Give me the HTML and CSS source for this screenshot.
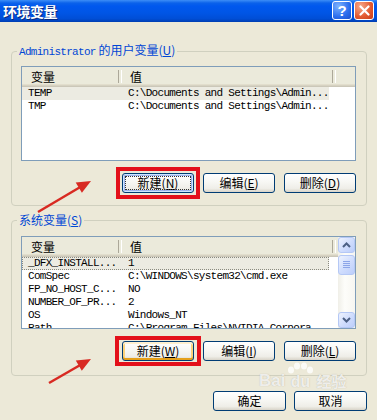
FILE: index.html
```html
<!DOCTYPE html>
<html lang="zh-CN">
<head>
  <meta charset="UTF-8">
  <meta name="viewport" content="width=device-width, initial-scale=1.0">
  <title>环境变量</title>
  <link rel="stylesheet" href="styles.css">
</head>
<body>
  <div class="window">
    <!-- Title bar -->
    <div class="titlebar">
      <span class="title">环境变量</span>
      <div class="caption">
        <button class="cap help">?</button>
        <button class="cap close">
          <svg width="11" height="11" viewBox="0 0 11 11"><path d="M1.5 1.5 L9.5 9.5 M9.5 1.5 L1.5 9.5" stroke="#fff" stroke-width="2.2" stroke-linecap="round"/></svg>
        </button>
      </div>
    </div>

    <div class="client">
      <!-- User variables -->
      <fieldset class="group user-group">
        <legend><span class="mono">Administrator</span> 的用户变量(<u>U</u>)</legend>
        <div class="listview user-list">
          <div class="lv-main">
            <div class="lv-header">
              <span class="hcell name">变量</span>
              <span class="hcell value">值</span>
            </div>
            <div class="row selected">
              <span class="cell name">TEMP</span>
              <span class="cell value">C:\Documents and Settings\Admin...</span>
            </div>
            <div class="row">
              <span class="cell name">TMP</span>
              <span class="cell value">C:\Documents and Settings\Admin...</span>
            </div>
          </div>
        </div>
        <div class="buttons">
          <span class="mark"><button class="btn default">新建(<u>N</u>)</button></span>
          <button class="btn">编辑(<u>E</u>)</button>
          <button class="btn">删除(<u>D</u>)</button>
        </div>
      </fieldset>

      <!-- System variables -->
      <fieldset class="group sys-group">
        <legend>系统变量(<u>S</u>)</legend>
        <div class="listview sys-list">
          <div class="lv-main">
            <div class="lv-header">
              <span class="hcell name">变量</span>
              <span class="hcell value">值</span>
            </div>
            <div class="row selected focus">
              <span class="cell name">_DFX_INSTALL...</span>
              <span class="cell value">1</span>
            </div>
            <div class="row">
              <span class="cell name">ComSpec</span>
              <span class="cell value">C:\WINDOWS\system32\cmd.exe</span>
            </div>
            <div class="row">
              <span class="cell name">FP_NO_HOST_C...</span>
              <span class="cell value">NO</span>
            </div>
            <div class="row">
              <span class="cell name">NUMBER_OF_PR...</span>
              <span class="cell value">2</span>
            </div>
            <div class="row">
              <span class="cell name">OS</span>
              <span class="cell value">Windows_NT</span>
            </div>
            <div class="row">
              <span class="cell name">Path</span>
              <span class="cell value">C:\Program Files\NVIDIA Corpora...</span>
            </div>
          </div>
          <div class="scrollbar">
            <span class="sb-btn">
              <svg width="9" height="6" viewBox="0 0 9 6"><path d="M1 5 L4.5 1.5 L8 5" fill="none" stroke="#4d6185" stroke-width="2"/></svg>
            </span>
            <span class="sb-track">
              <span class="sb-thumb">
                <svg width="7" height="8" viewBox="0 0 7 8"><path d="M0 0.5 H7 M0 2.5 H7 M0 4.5 H7 M0 6.5 H7" stroke="#8ca5e8" stroke-width="1"/></svg>
              </span>
            </span>
            <span class="sb-btn">
              <svg width="9" height="6" viewBox="0 0 9 6"><path d="M1 1 L4.5 4.5 L8 1" fill="none" stroke="#4d6185" stroke-width="2"/></svg>
            </span>
          </div>
        </div>
        <div class="buttons">
          <span class="mark mark-wide"><button class="btn hot">新建(<u>W</u>)</button></span>
          <button class="btn">编辑(<u>I</u>)</button>
          <button class="btn">删除(<u>L</u>)</button>
        </div>
      </fieldset>

      <div class="footer-buttons">
        <button class="btn">确定</button>
        <button class="btn">取消</button>
      </div>
    </div>

    <!-- Baidu watermark -->
    <div class="watermark">
      <span class="wm-bai">Bai</span>
      <span class="wm-du">
        <svg width="30" height="12" viewBox="0 0 30 12">
          <ellipse cx="6" cy="8" rx="3" ry="3.5"/>
          <ellipse cx="12" cy="4" rx="3" ry="3.5"/>
          <ellipse cx="19" cy="4" rx="3" ry="3.5"/>
          <ellipse cx="25" cy="8" rx="3" ry="3.5"/>
        </svg>
        <span>du</span>
      </span>
      <span class="wm-jy">经验</span>
    </div>

    <!-- Annotation arrows -->
    <svg class="arrows" width="377" height="420" viewBox="0 0 377 420">
      <line x1="38" y1="212" x2="82" y2="186" stroke="#d82a22" stroke-width="2.5"/>
      <polygon points="91,181 81.9,192.8 75.7,182.5" fill="#d82a22"/>
      <line x1="49" y1="383" x2="82" y2="364" stroke="#d82a22" stroke-width="2.5"/>
      <polygon points="91,359 81.8,370.8 75.8,360.4" fill="#d82a22"/>
    </svg>
  </div>
</body>
</html>
```

FILE: styles.css
```css
/* General */
* {
  box-sizing: border-box;
}

body {
  margin: 0;
  width: 377px;
  height: 420px;
  overflow: hidden;
  background: #ece9d8;
  font-family: "Noto Sans CJK SC", "Noto Sans", sans-serif;
  font-size: 12px;
  color: #000;
}

.window {
  position: relative;
  height: 420px;
}

/* Title bar */
.titlebar {
  height: 22px;
  display: flex;
  align-items: flex-start;
  justify-content: space-between;
  padding: 1px 3px 0 3px;
  background: linear-gradient(to bottom, #3d8ef7 0, #0b62ea 3px, #0058ee 6px, #0055e5 60%, #004ed6 85%, #003eb2 100%);
}

.title {
  color: #fff;
  font-weight: bold;
  font-size: 14px;
  line-height: 20px;
  letter-spacing: -0.5px;
  text-shadow: 1px 1px 0 #0a2a7e;
}

.caption {
  display: flex;
  gap: 2px;
}

.cap {
  width: 20px;
  height: 19px;
  padding: 0;
  border: 1px solid #fff;
  border-radius: 3px;
  display: flex;
  align-items: center;
  justify-content: center;
  color: #fff;
  font: bold 15px/17px "Liberation Sans", sans-serif;
}

.help {
  background: radial-gradient(circle at 30% 25%, #7db3ff 0, #2b6ded 60%, #1c4fcc 100%);
}

.close {
  background: radial-gradient(circle at 30% 25%, #f7a98b 0, #e2582f 60%, #c63e1b 100%);
}

/* Client area */
.client {
  padding: 21px 10px 0 11px;
}

.group {
  margin: 0;
  padding: 0 10px 12px 9px;
  min-inline-size: 0;
  border: 1px solid #d0d0bf;
  border-radius: 4px;
}

.sys-group {
  margin-top: 7px;
  padding-bottom: 14px;
}

.group legend {
  margin-left: -4px;
  padding: 0 2px;
  color: #0046d5;
  font-size: 12px;
  line-height: 14px;
}

.mono,
.cell {
  font-family: "Liberation Mono", monospace;
  font-size: 11px;
  letter-spacing: -0.7px;
}

/* List views */
.listview {
  display: flex;
  border: 1px solid #7f9db9;
  background: #fff;
  overflow: hidden;
}

.user-list {
  margin-top: 7px;
  height: 95px;
}

.sys-list {
  margin-top: 9px;
  height: 93px;
}

.lv-main {
  flex: 1;
  overflow: hidden;
}

.lv-header {
  display: flex;
  height: 20px;
  background: #ebeadb;
  box-shadow: inset 0 -1px 0 #cbc7b8, inset 0 -2px 0 #d6d2c2, inset 0 -3px 0 #e2decd;
}

.hcell {
  position: relative;
  line-height: 19px;
}

.hcell::after {
  content: "";
  position: absolute;
  right: 0;
  top: 3px;
  bottom: 4px;
  width: 2px;
  border-left: 1px solid #aca899;
  border-right: 1px solid #fff;
}

.hcell.name {
  width: 100px;
  padding-left: 9px;
}

.hcell.value {
  width: 214px;
  padding-left: 8px;
}

.row {
  display: flex;
  width: 307px;
  height: 13px;
  line-height: 13px;
  white-space: nowrap;
}

.row.selected {
  background: #ecebe2;
}

.row.focus {
  outline: 1px dotted #8a8a80;
  outline-offset: -1px;
}

.cell.name {
  width: 100px;
  padding-left: 6px;
}

.cell.value {
  padding-left: 6px;
}

/* Scrollbar */
.scrollbar {
  width: 17px;
  display: flex;
  flex-direction: column;
  background: linear-gradient(to right, #f0efe8, #fdfdfa 40%, #f7f6f1);
}

.sb-btn,
.sb-thumb {
  display: flex;
  align-items: center;
  justify-content: center;
  border: 1px solid #b5c8f5;
  border-radius: 3px;
  background: linear-gradient(135deg, #eef3fe 0, #cfdcfd 55%, #bccefb 100%);
}

.sb-btn {
  height: 16px;
}

.sb-track {
  flex: 1;
  padding-top: 2px;
}

.sb-thumb {
  height: 20px;
}

/* Buttons */
.buttons {
  display: flex;
  justify-content: flex-end;
  gap: 9px;
  margin-top: 12px;
}

.btn {
  position: relative;
  width: 72px;
  height: 20px;
  padding: 0;
  border: 1px solid #003c74;
  border-radius: 3px;
  background: linear-gradient(to bottom, #fff 0, #f8f8f5 40%, #efeee8 80%, #d8d3c8 100%);
  font-family: "Noto Sans CJK SC", sans-serif;
  font-size: 12px;
  line-height: 18px;
  color: #000;
}

.btn.default {
  box-shadow: inset 0 0 0 1px #cee7ff, inset 0 0 0 2px #9db3ec;
}

.btn.default::after {
  content: "";
  position: absolute;
  inset: 2px;
  border: 1px dotted #333;
}

.btn.hot {
  box-shadow: inset 0 2px 0 #fff0cf, inset 0 -2px 0 #e5a01a, inset 2px 0 0 #fbd27c, inset -2px 0 0 #fbd27c;
}

.mark {
  display: flex;
  border: 4px solid #e3101a;
  padding: 2px;
  margin: -6px;
}

.mark-wide {
  padding: 1px 3px;
  margin: -5px -7px;
}

.footer-buttons {
  display: flex;
  justify-content: flex-end;
  gap: 8px;
  margin-top: 15px;
}

.footer-buttons .btn {
  width: 73px;
}

/* Watermark */
.watermark {
  position: absolute;
  left: 259px;
  top: 362px;
  display: flex;
  align-items: flex-end;
  color: rgba(255, 255, 255, 0.8);
  text-shadow: 0 0 1px rgba(140, 135, 120, 0.6);
  pointer-events: none;
}

.wm-bai {
  font: bold 17px/18px "Liberation Sans", sans-serif;
}

.wm-du {
  display: flex;
  flex-direction: column;
  align-items: center;
  font: bold 16px/16px "Liberation Sans", sans-serif;
}

.wm-du svg {
  fill: rgba(255, 255, 255, 0.8);
}

.wm-jy {
  font-size: 15px;
  font-weight: bold;
  line-height: 18px;
  margin-left: 1px;
}

/* Annotation arrows */
.arrows {
  position: absolute;
  top: 0;
  left: 0;
  pointer-events: none;
}
```
